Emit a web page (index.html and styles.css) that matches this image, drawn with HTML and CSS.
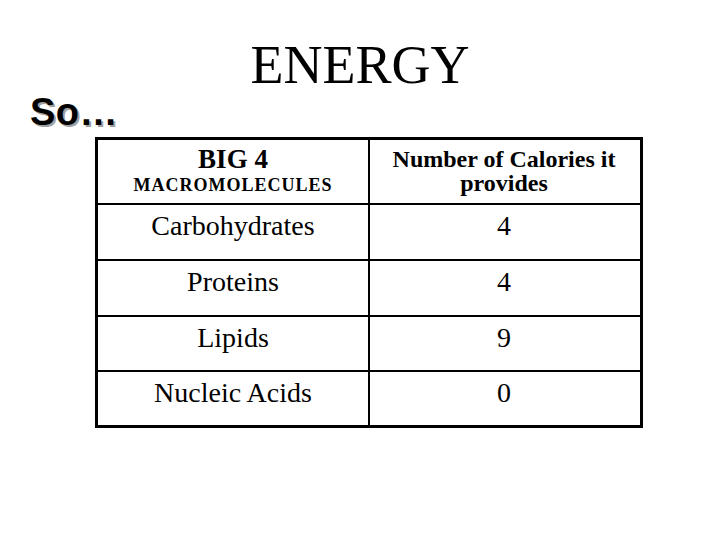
FILE: index.html
```html
<!DOCTYPE html>
<html>
<head>
<meta charset="utf-8">
<link rel="stylesheet" href="styles.css">
</head>
<body>
<div class="slide">
  <h1 class="title">ENERGY</h1>
  <div class="so">So…</div>
  <div class="grid">
    <div class="cell head c1">
      <div class="big">BIG 4</div>
      <div class="macro">MACROMOLECULES</div>
    </div>
    <div class="cell head c2">
      <div class="cal">Number of Calories it<br>provides</div>
    </div>
    <div class="cell c1"><span class="txt">Carbohydrates</span></div>
    <div class="cell c2"><span class="txt">4</span></div>
    <div class="cell c1"><span class="txt">Proteins</span></div>
    <div class="cell c2"><span class="txt">4</span></div>
    <div class="cell c1"><span class="txt">Lipids</span></div>
    <div class="cell c2"><span class="txt">9</span></div>
    <div class="cell c1 last"><span class="txt">Nucleic Acids</span></div>
    <div class="cell c2 last"><span class="txt">0</span></div>
  </div>
</div>
</body>
</html>
```
FILE: styles.css
```css
html, body {
  margin: 0;
  padding: 0;
  background: #fff;
}
.slide {
  width: 720px;
  height: 540px;
  position: relative;
  overflow: hidden;
  font-family: "Liberation Serif", "Times New Roman", serif;
  color: #000;
}
.title {
  margin: 38px 0 0 0;
  padding-left: 0;
  text-align: center;
  font-family: "Liberation Serif", "Times New Roman", serif;
  font-weight: normal;
  font-size: 54px;
  line-height: 54px;
  height: 54px;
}
.so {
  margin: 1px 0 0 30px;
  font-family: "Liberation Sans", Arial, sans-serif;
  font-weight: bold;
  font-size: 38px;
  line-height: 38px;
  height: 38px;
  letter-spacing: 0.5px;
  text-shadow: 2px 2px 0 #a0a0a0;
}
.grid {
  margin: 6px 0 0 95px;
  width: 542px;
  border: 3px solid #000;
  display: grid;
  grid-template-columns: 270px 272px;
  grid-template-rows: 65px 56px 56px 55px 53px;
}
.cell {
  display: flex;
  flex-direction: column;
  align-items: center;
  justify-content: flex-start;
  border-bottom: 2px solid #000;
  padding-top: 7px;
  box-sizing: border-box;
}
.cell.c1 {
  border-right: 2px solid #000;
  width: 272px;
}
.cell.last {
  border-bottom: none;
}
.txt {
  font-size: 28px;
  line-height: 28px;
}
.big {
  font-weight: bold;
  font-size: 27px;
  line-height: 27px;
  margin-top: -1px;
}
.macro {
  font-weight: bold;
  font-size: 18px;
  line-height: 18px;
  letter-spacing: 1px;
  margin-top: 3px;
}
.head.c2 {
  padding-top: 7px;
}
.cal {
  font-weight: bold;
  font-size: 24px;
  line-height: 24px;
  text-align: center;
}
```
